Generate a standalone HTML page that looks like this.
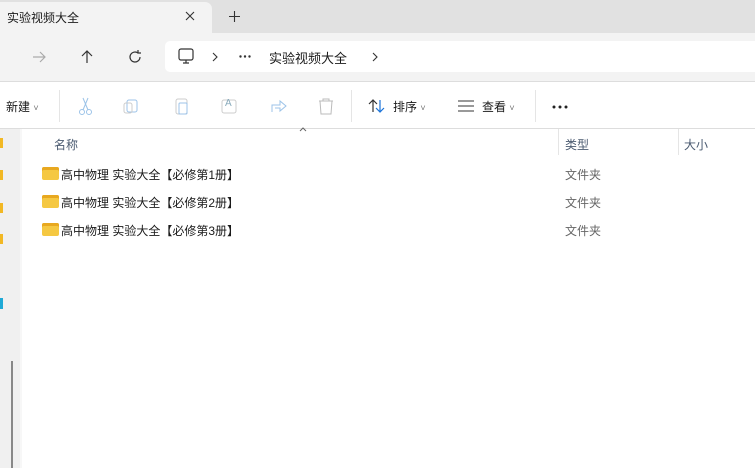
<!DOCTYPE html><html><head><meta charset="utf-8"><style>
body{margin:0;width:755px;height:468px;overflow:hidden;background:#fff;font-family:"Liberation Sans","Noto Sans CJK SC",sans-serif;position:relative;font-size:12px;color:#1a1a1a}
.a{position:absolute}
</style></head><body>
<div class="a" style="left:0;top:0;width:755px;height:33px;background:#e1e1e1"></div>
<div class="a" style="left:0;top:2px;width:212px;height:31px;background:#f3f3f3;border-radius:0 7px 0 0"></div>
<div class="a" style="left:7px;top:9px;font-size:12px">实验视频大全</div>
<svg class="a" style="left:185px;top:11px" width="10" height="10" fill="none" stroke="#333" stroke-width="1.1"><path d="M1 1l8 8M9 1l-8 8"/></svg>
<svg class="a" style="left:229px;top:11px" width="11" height="11" fill="none" stroke="#333" stroke-width="1.1"><path d="M5.5 0v11M0 5.5h11"/></svg>
<div class="a" style="left:0;top:33px;width:755px;height:48px;background:#f3f3f3"></div>
<div class="a" style="left:165px;top:41px;width:590px;height:31px;background:#fff;border-radius:5px 0 0 5px"></div>
<svg class="a" style="left:30px;top:48px" width="18" height="18" viewBox="0 0 18 18" fill="none" stroke="#aaa" stroke-width="1.2"><path d="M3 9h12M10 4l5 5-5 5"/></svg>
<svg class="a" style="left:78px;top:48px" width="18" height="18" viewBox="0 0 18 18" fill="none" stroke="#333" stroke-width="1.2"><path d="M9 15V3M4 8l5-5 5 5"/></svg>
<svg class="a" style="left:126px;top:48px" width="18" height="18" viewBox="0 0 18 18" fill="none" stroke="#333" stroke-width="1.2"><path d="M14 9a5 5 0 1 1-2-4M12 2v3h3"/></svg>
<svg class="a" style="left:177px;top:47px" width="18" height="18" viewBox="0 0 18 18" fill="none" stroke="#333" stroke-width="1.2"><rect x="2" y="2" width="14" height="11" rx="2"/><path d="M6 16h6M9 13v3"/></svg>
<svg class="a" style="left:212px;top:52px" width="6" height="10" fill="none" stroke="#333" stroke-width="1.1"><path d="M1 1l4 4-4 4"/></svg>
<svg class="a" style="left:239px;top:55px" width="12" height="3" fill="#333"><circle cx="1.5" cy="1.5" r="1.2"/><circle cx="6" cy="1.5" r="1.2"/><circle cx="10.5" cy="1.5" r="1.2"/></svg>
<div class="a" style="left:269px;top:48px;font-size:13px">实验视频大全</div>
<svg class="a" style="left:372px;top:52px" width="6" height="10" fill="none" stroke="#333" stroke-width="1.1"><path d="M1 1l4 4-4 4"/></svg>
<div class="a" style="left:0;top:81px;width:755px;height:1px;background:#ddd"></div>
<div class="a" style="left:6px;top:98px">新建 <span style="font-size:9px;color:#777">˅</span></div>
<div class="a" style="left:59px;top:90px;width:1px;height:32px;background:#e5e5e5"></div>
<div class="a" style="left:351px;top:90px;width:1px;height:32px;background:#e5e5e5"></div>
<div class="a" style="left:535px;top:90px;width:1px;height:32px;background:#e5e5e5"></div>
<svg class="a" style="left:77px;top:96px" width="160" height="20" viewBox="0 0 160 20" fill="none" stroke="#9cc3e8" stroke-width="1"><circle cx="5" cy="16" r="2.5"/><circle cx="12" cy="16" r="2.5"/><path d="M6 14L11 2M11 14L6 2"/><rect x="50" y="4" width="10" height="12" rx="2"/><rect x="47" y="7" width="8" height="10" rx="2" stroke="#ccc"/><rect x="99" y="3" width="11" height="15" rx="2" stroke="#ccc"/><rect x="102" y="7" width="8" height="11" rx="1"/><rect x="145" y="4" width="14" height="13" rx="2" stroke="#ccc"/></svg>
<div class="a" style="left:225px;top:98px;font-size:10px;color:#8ab">A</div>
<svg class="a" style="left:268px;top:96px" width="80" height="20" viewBox="0 0 80 20" fill="none" stroke="#9cc3e8" stroke-width="1"><path d="M4 16V9h8V5l6 5-6 5v-3H7"/><path stroke="#bbb" d="M51 5h14M55 5V3h6v2M52 5l1 13h10l1-13"/></svg>
<svg class="a" style="left:368px;top:97px" width="18" height="18" viewBox="0 0 18 18" fill="none" stroke-width="1.2"><path stroke="#333" d="M5 15V3M1 7l4-4 4 4"/><path stroke="#1a73d9" d="M12 3v12M8 11l4 4 4-4"/></svg>
<div class="a" style="left:393px;top:98px">排序 <span style="font-size:9px;color:#777">˅</span></div>
<svg class="a" style="left:457px;top:99px" width="18" height="14" fill="none" stroke="#333" stroke-width="1"><path d="M1 2h16M1 7h16M1 12h16"/></svg>
<div class="a" style="left:482px;top:98px">查看 <span style="font-size:9px;color:#777">˅</span></div>
<svg class="a" style="left:552px;top:105px" width="16" height="4" fill="#222"><circle cx="2" cy="2" r="1.5"/><circle cx="8" cy="2" r="1.5"/><circle cx="14" cy="2" r="1.5"/></svg>
<div class="a" style="left:0;top:128px;width:755px;height:1px;background:#ddd"></div>
<div class="a" style="left:0;top:129px;width:20px;height:339px;background:#f0f0f0"></div>
<div class="a" style="left:20px;top:129px;width:2px;height:339px;background:#f7f7f7"></div>
<div class="a" style="left:11px;top:361px;width:2px;height:107px;background:#888"></div>
<div class="a" style="left:0;top:138px;width:3px;height:10px;background:#f2b824"></div>
<div class="a" style="left:0;top:170px;width:3px;height:10px;background:#f2b824"></div>
<div class="a" style="left:0;top:203px;width:3px;height:10px;background:#f2b824"></div>
<div class="a" style="left:0;top:234px;width:3px;height:10px;background:#f2b824"></div>
<div class="a" style="left:0;top:298px;width:3px;height:11px;background:#1fa9d6"></div>
<svg class="a" style="left:299px;top:127px" width="8" height="5" fill="none" stroke="#666" stroke-width="1"><path d="M1 4l3-3 3 3"/></svg>
<div class="a" style="left:54px;top:136px;color:#4a5a70">名称</div>
<div class="a" style="left:558px;top:129px;width:1px;height:26px;background:#e5e5e5"></div>
<div class="a" style="left:678px;top:129px;width:1px;height:26px;background:#e5e5e5"></div>
<div class="a" style="left:565px;top:136px;color:#4a5a70">类型</div>
<div class="a" style="left:684px;top:136px;color:#4a5a70">大小</div>
<div class="a" style="left:42px;top:167px;width:17px;height:13px;background:#f5c842;border-radius:2px;box-shadow:inset 0 3px 0 #e8a820"></div>
<div class="a" style="left:61px;top:166px">高中物理 实验大全【必修第1册】</div>
<div class="a" style="left:565px;top:166px;color:#666">文件夹</div>
<div class="a" style="left:42px;top:195px;width:17px;height:13px;background:#f5c842;border-radius:2px;box-shadow:inset 0 3px 0 #e8a820"></div>
<div class="a" style="left:61px;top:194px">高中物理 实验大全【必修第2册】</div>
<div class="a" style="left:565px;top:194px;color:#666">文件夹</div>
<div class="a" style="left:42px;top:223px;width:17px;height:13px;background:#f5c842;border-radius:2px;box-shadow:inset 0 3px 0 #e8a820"></div>
<div class="a" style="left:61px;top:222px">高中物理 实验大全【必修第3册】</div>
<div class="a" style="left:565px;top:222px;color:#666">文件夹</div>
</body></html>
